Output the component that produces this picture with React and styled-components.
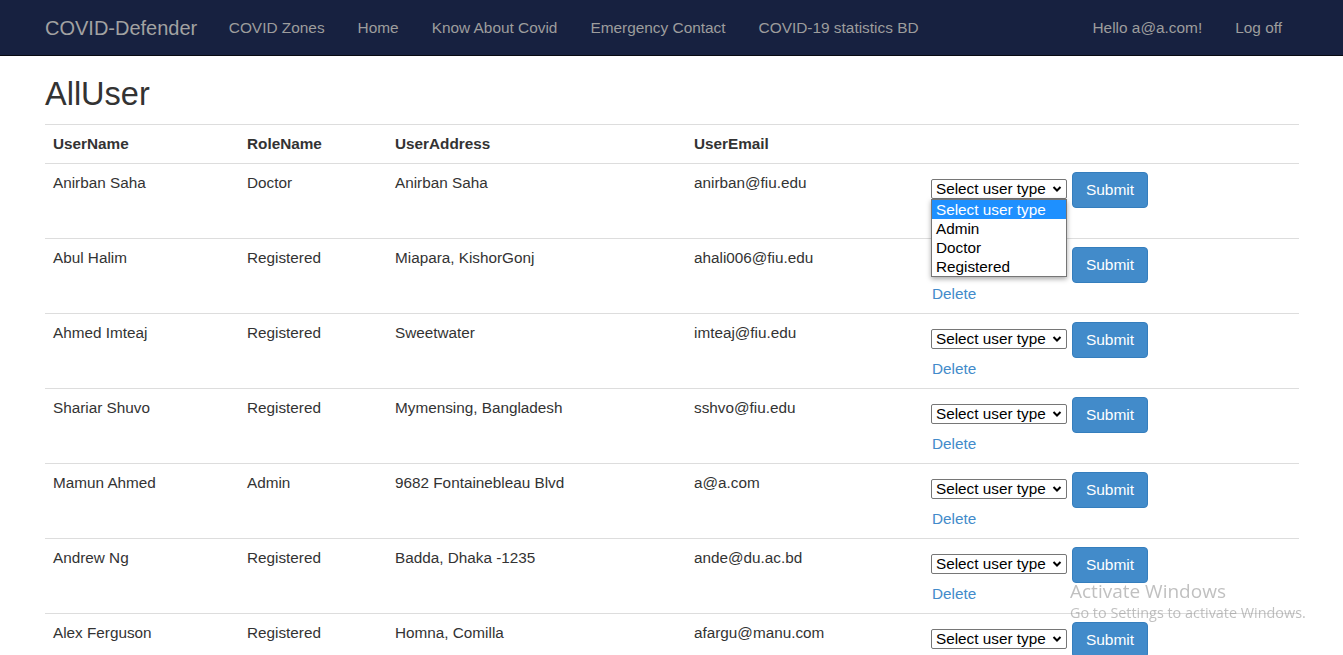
import React from "react";
import styled, { createGlobalStyle } from "styled-components";

const Global = createGlobalStyle`
  html, body { margin: 0; padding: 0; overflow: hidden; }
  body {
    font-family: "Liberation Sans", Arial, Helvetica, sans-serif;
    font-size: 15.3px;
    line-height: 21.5px;
    color: #333;
    background: #fff;
  }
  * { box-sizing: border-box; }
`;

const Navbar = styled.nav`
  height: 56px;
  background: #172140;
  border-bottom: 1px solid #080a12;
  display: flex;
  align-items: center;
  padding: 0 45px;
`;

const Brand = styled.a`
  font-size: 20px;
  color: #a2a2a2;
  text-decoration: none;
  line-height: 20px;
  padding-right: 15px;
`;

const NavList = styled.div`
  display: flex;
  align-items: center;
  flex: ${(p) => (p.$grow ? 1 : "0 0 auto")};
`;

const NavLink = styled.a`
  color: #9d9d9d;
  text-decoration: none;
  font-size: 15.4px;
  line-height: 20px;
  padding: 0 16.5px;
  &:last-child { padding-right: ${(p) => (p.$flushRight ? 16 : 16.5)}px; }
`;

const Container = styled.main`
  padding: 0 44px 0 45px;
`;

const Title = styled.h2`
  font-size: 32.5px;
  font-weight: 500;
  line-height: 36px;
  margin: 20px 0 12px;
  color: #333;
`;

const Table = styled.table`
  width: 100%;
  border-collapse: collapse;
  table-layout: fixed;
  border-top: 1px solid #ddd;
`;

const Th = styled.th`
  text-align: left;
  font-weight: 700;
  padding: 8px;
  border-bottom: 1px solid #ddd;
  vertical-align: bottom;
`;

const Td = styled.td`
  padding: 8px;
  border-top: 1px solid #ddd;
  vertical-align: top;
`;

const Actions = styled.div`
  display: flex;
  align-items: flex-start;
  gap: 5px;
`;

const SelectWrap = styled.div`
  position: relative;
  margin-top: 7px;
`;

const SelectBox = styled.div`
  width: 136px;
  height: 20px;
  border: 1px solid #767676;
  border-radius: 2px;
  background: #fff;
  color: #000;
  font-size: 15.3px;
  line-height: 18px;
  padding: 0 0 0 4px;
  display: flex;
  align-items: center;
  justify-content: space-between;
  white-space: nowrap;
`;

const Chevron = styled.svg`
  width: 10px;
  height: 10px;
  margin-right: 4px;
  flex: none;
`;

const Dropdown = styled.ul`
  position: absolute;
  top: 20px;
  left: 0;
  width: 136px;
  margin: 0;
  padding: 0;
  list-style: none;
  background: #fff;
  border: 1px solid #767676;
  box-shadow: 0 2px 5px rgba(0, 0, 0, 0.35);
  z-index: 5;
`;

const Option = styled.li`
  height: 19px;
  line-height: 19px;
  font-size: 15.3px;
  padding: 0 4px;
  color: ${(p) => (p.$active ? "#fff" : "#000")};
  background: ${(p) => (p.$active ? "#1e90ff" : "#fff")};
`;

const Button = styled.button`
  height: 36px;
  width: 76px;
  padding: 0;
  font-family: inherit;
  font-size: 15.5px;
  color: #fff;
  background: #428bca;
  border: 1px solid #357ebd;
  border-radius: 4px;
`;

const DeleteLink = styled.a`
  display: block;
  color: #428bca;
  text-decoration: none;
  line-height: 22px;
  margin-left: 1px;
`;

const Watermark = styled.div`
  position: fixed;
  left: 1070px;
  top: 578px;
  color: rgba(140, 140, 140, 0.55);
  font-family: "Open Sans", "Noto Sans", sans-serif;
  pointer-events: none;
  white-space: nowrap;
`;

const WmTitle = styled.div`
  font-size: 19px;
  line-height: 26px;
`;

const WmSub = styled.div`
  font-size: 14.4px;
  line-height: 18px;
`;

const users = [
  ["Anirban Saha", "Doctor", "Anirban Saha", "anirban@fiu.edu"],
  ["Abul Halim", "Registered", "Miapara, KishorGonj", "ahali006@fiu.edu"],
  ["Ahmed Imteaj", "Registered", "Sweetwater", "imteaj@fiu.edu"],
  ["Shariar Shuvo", "Registered", "Mymensing, Bangladesh", "sshvo@fiu.edu"],
  ["Mamun Ahmed", "Admin", "9682 Fontainebleau Blvd", "a@a.com"],
  ["Andrew Ng", "Registered", "Badda, Dhaka -1235", "ande@du.ac.bd"],
  ["Alex Ferguson", "Registered", "Homna, Comilla", "afargu@manu.com"],
  ["Jose Mourinho", "Registered", "Dhaka", "jose@manu.com"],
];

const options = ["Select user type", "Admin", "Doctor", "Registered"];

function Select({ open }) {
  return (
    <SelectWrap>
      <SelectBox>
        Select user type
        <Chevron viewBox="0 0 10 10">
          <path d="M1.5 3 L5 6.5 L8.5 3" fill="none" stroke="#000" strokeWidth="2" />
        </Chevron>
      </SelectBox>
      {open && (
        <Dropdown>
          {options.map((o, i) => (
            <Option key={o} $active={i === 0}>{o}</Option>
          ))}
        </Dropdown>
      )}
    </SelectWrap>
  );
}

export default function App() {
  return (
    <>
      <Global />
      <Navbar>
        <Brand href="#">COVID-Defender</Brand>
        <NavList $grow>
          <NavLink href="#">COVID Zones</NavLink>
          <NavLink href="#">Home</NavLink>
          <NavLink href="#">Know About Covid</NavLink>
          <NavLink href="#">Emergency Contact</NavLink>
          <NavLink href="#">COVID-19 statistics BD</NavLink>
        </NavList>
        <NavList>
          <NavLink href="#">Hello a@a.com!</NavLink>
          <NavLink href="#" $flushRight>Log off</NavLink>
        </NavList>
      </Navbar>
      <Container>
        <Title>AllUser</Title>
        <Table>
          <colgroup>
            <col style={{ width: 194 }} />
            <col style={{ width: 148 }} />
            <col style={{ width: 299 }} />
            <col style={{ width: 237 }} />
            <col />
          </colgroup>
          <thead>
            <tr>
              <Th>UserName</Th>
              <Th>RoleName</Th>
              <Th>UserAddress</Th>
              <Th>UserEmail</Th>
              <Th></Th>
            </tr>
          </thead>
          <tbody>
            {users.map((u, i) => (
              <tr key={u[3]}>
                <Td>{u[0]}</Td>
                <Td>{u[1]}</Td>
                <Td>{u[2]}</Td>
                <Td>{u[3]}</Td>
                <Td>
                  <Actions>
                    <Select open={i === 0} />
                    <Button>Submit</Button>
                  </Actions>
                  <DeleteLink href="#">Delete</DeleteLink>
                </Td>
              </tr>
            ))}
          </tbody>
        </Table>
      </Container>
      <Watermark>
        <WmTitle>Activate Windows</WmTitle>
        <WmSub>Go to Settings to activate Windows.</WmSub>
      </Watermark>
    </>
  );
}
